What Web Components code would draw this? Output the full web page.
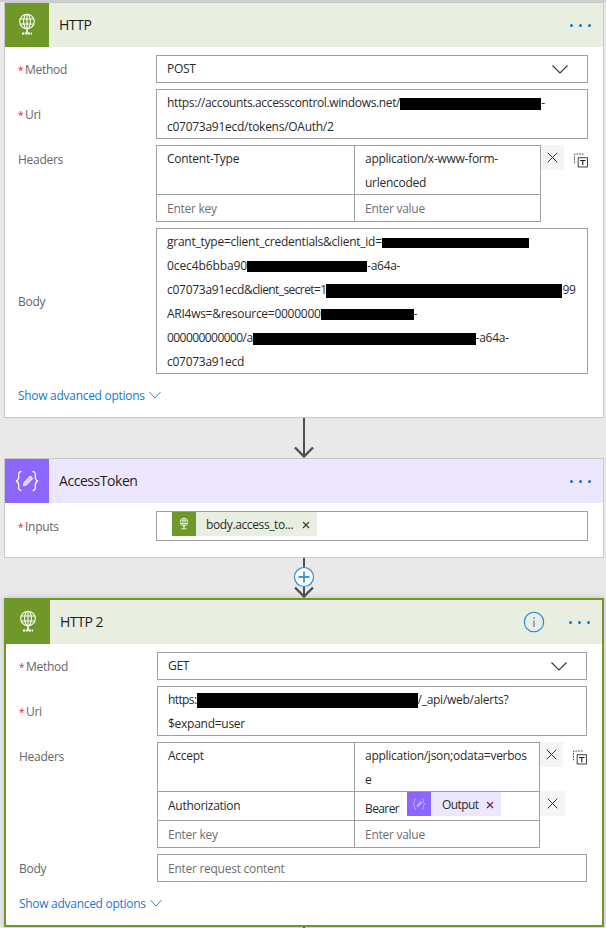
<!DOCTYPE html>
<html><head><meta charset="utf-8">
<style>
html,body{margin:0;padding:0}
body{background:#e9e9e9;width:606px;height:928px;overflow:hidden;box-sizing:border-box;padding:0 2px 0 4px;border-top:2px solid #cfcfcf;font:12px/24px "Open Sans","Noto Sans",sans-serif;letter-spacing:-.27px;color:#2b2b2b}
</style></head><body>
<flow-card kind="http" title="HTTP" first>
  <flow-row label="Method" required><flow-select>POST</flow-select></flow-row>
  <flow-row label="Uri" required><flow-field><span style="letter-spacing:-.36px">https://accounts.accesscontrol.windows.net/</span><black-out w="141" h="12"></black-out>-<br>c07073a91ecd/tokens/OAuth/2</flow-field></flow-row>
  <flow-row label="Headers" top><flow-headers key="199" val="186">
    <flow-cell kind="key" top>Content-Type</flow-cell><flow-cell kind="val" top>application/x-www-form-<br>urlencoded</flow-cell><flow-actions del trash></flow-actions>
    <flow-cell kind="key" ph>Enter key</flow-cell><flow-cell kind="val" ph>Enter value</flow-cell><flow-actions></flow-actions>
  </flow-headers></flow-row>
  <flow-row label="Body"><flow-field><span style="letter-spacing:-.245px">grant_type=client_credentials&amp;client_id=</span><black-out w="147" h="10"></black-out><br><span style="letter-spacing:-.1px">0cec4b6bba90</span><black-out w="120" h="11"></black-out>-a64a-<br>c07073a91ecd<span style="letter-spacing:-.6px">&amp;client_secret=1</span><black-out w="236" h="14"></black-out>99<br>ARI4ws=&amp;resource=0000000<black-out w="93" h="11"></black-out>-<br><span style="letter-spacing:-.56px">000000000000/a</span><black-out w="223" h="12"></black-out>-a64a-<br>c07073a91ecd</flow-field></flow-row>
  <flow-more></flow-more>
</flow-card>
<flow-link></flow-link>
<flow-card kind="var" title="AccessToken">
  <flow-row label="Inputs" required><flow-inputs><flow-chip kind="http" wide>body.access_to...</flow-chip></flow-inputs></flow-row>
</flow-card>
<flow-link plus></flow-link>
<flow-card kind="http" title="HTTP 2" selected info>
  <flow-row label="Method" required><flow-select>GET</flow-select></flow-row>
  <flow-row label="Uri" required><flow-field><span style="letter-spacing:-.6px">https:</span><black-out w="221" h="15"></black-out>/_api/web/alerts?<br>$expand=user</flow-field></flow-row>
  <flow-row label="Headers" top><flow-headers key="198" val="185">
    <flow-cell kind="key" top>Accept</flow-cell><flow-cell kind="val" top>application/json;odata=verbos<br>e</flow-cell><flow-actions del trash></flow-actions>
    <flow-cell kind="key" tall>Authorization</flow-cell><flow-cell kind="val" tall flush><flow-bearer>Bearer</flow-bearer><flow-chip kind="var">Output</flow-chip></flow-cell><flow-actions del up></flow-actions>
    <flow-cell kind="key" ph>Enter key</flow-cell><flow-cell kind="val" ph>Enter value</flow-cell><flow-actions></flow-actions>
  </flow-headers></flow-row>
  <flow-row label="Body"><flow-field single ph>Enter request content</flow-field></flow-row>
  <flow-more></flow-more>
</flow-card>
<flow-stub></flow-stub>
<script>
const globe=`<svg viewBox="0 0 44 44" width="100%" height="100%" fill="none" stroke="#fff" stroke-width="1.1"><circle cx="22" cy="18.5" r="7.3"/><ellipse cx="22" cy="18.5" rx="3.4" ry="7.3"/><path d="M22 11.2v14.6M15.2 16h13.6M15.2 21h13.6"/><path d="M22 26v5" stroke-width="1.6"/><path d="M17 30.6h10" stroke-width="2" stroke-dasharray="2.2 .7"/></svg>`;
const braces=`<svg viewBox="0 0 44 44" width="100%" height="100%" fill="none" stroke="#fff" stroke-width="1.3"><path d="M16.5 12.5c-3.4 0-2.8 2.6-2.8 5 0 2.600-.6 4-2.700 4.500 2.100.5 2.700 1.900 2.700 4.500 0 2.400-.6 5 2.800 5"/><path d="M27.500 12.500c3.400 0 2.800 2.600 2.800 5 0 2.600.6 4 2.700 4.500-2.100.5-2.700 1.900-2.700 4.500 0 2.400.6 5-2.800 5"/><path d="M18.300 26.800l1-3.500 6-6.300 2.500 2.400-6 6.300z" fill="#d9ccff" stroke-width="1"/></svg>`;
const css=(s)=>`<style>${s}</style>`;
function def(name,render){customElements.define(name,class extends HTMLElement{constructor(){super();this.attachShadow({mode:'open'})}connectedCallback(){this.shadowRoot.innerHTML=render(this)}})}
const nudge='.n{margin:1px 0 -1px}';

def('flow-card',el=>{
  const v=el.getAttribute('kind')==='var';
  const bg=v?'#8c66ff':'#6f9829', tint=v?'#ece7ff':'#e8eee0';
  const info=el.hasAttribute('info')?`<svg class="info" width="22" height="22" viewBox="0 0 22 22"><circle cx="11" cy="11" r="9.7" fill="none" stroke="#1a80d8" stroke-width="1.1"/><rect x="10.200" y="9.500" width="1.500" height="6.500" fill="#7d88cf"/><rect x="10.200" y="6.300" width="1.500" height="1.600" fill="#7d88cf"/></svg>`:'';
  return css(`:host{display:block;width:600px;box-sizing:border-box;background:#fff;border:1px solid #c8c8c8;padding-bottom:${v?'16px':'0'}}
  :host([selected]){border:2px solid #6f9829;box-shadow:0 0 6px rgba(0,0,0,.18)}
  header{display:flex;align-items:center;height:44px;background:${tint}}
  .ic{width:44px;height:44px;background:${bg};flex:none}
  h2{margin:0 0 0 10px;font:inherit;font-size:14px;line-height:44px;letter-spacing:-.45px;color:#1d1d1d;flex:1}
  .info{margin-right:24px;flex:none}
  .dots{display:flex;gap:6px;margin-right:12px}
  .dots i{width:3px;height:3px;background:#0a78d8;border-radius:50%}
  main{display:flex;flex-direction:column;gap:6px;padding:8px 15px 0 13px}`)
  +`<header><div class="ic">${v?braces:globe}</div><h2>${el.getAttribute('title')}</h2>${info}<div class="dots"><i></i><i></i><i></i></div></header><main><slot></slot></main>`;
});
def('flow-row',el=>css(`:host{display:flex;align-items:${el.hasAttribute('top')?'flex-start':'center'}}
  .l{width:138px;flex:none;color:#666;display:flex;align-items:baseline;${el.hasAttribute('top')?'padding-top:2px;':''}}
  .s{color:#e0203a;width:7px;font-size:10px;flex:none}
  .f{flex:1;min-width:0}${nudge}`)
  +`<div class="l n">${el.hasAttribute('required')?'<span class="s">*</span>':''}<span>${el.getAttribute('label')}</span></div><div class="f"><slot></slot></div>`);
def('flow-field',el=>css(`:host{display:block;border:1px solid #a0a0a0;padding:0 10px;line-height:24px;white-space:nowrap;background:#fff}
  :host([single]){line-height:26px}:host([ph]){color:#6f6f6f}${nudge}`)+`<div class="n"><slot></slot></div>`);
def('flow-select',el=>css(`:host{display:flex;align-items:center;justify-content:space-between;border:1px solid #a0a0a0;padding:0 19px 0 10px;height:28px;box-sizing:border-box;line-height:26px}
  svg{display:block}`)+`<div><slot></slot></div><svg width="16" height="9" viewBox="0 0 16 9" fill="none" stroke="#333" stroke-width="1.100"><path d="M.5.5L8 8l7.500-7.500"/></svg>`);
def('flow-inputs',el=>css(`:host{display:flex;align-items:flex-start;border:1px solid #a0a0a0;height:30px;box-sizing:border-box;padding-left:15px}`)+`<slot></slot>`);
def('black-out',el=>css(`:host{display:inline-block;vertical-align:middle;background:#000;width:${el.getAttribute('w')}px;height:${el.getAttribute('h')}px}`));
def('flow-headers',el=>css(`:host{display:grid;grid-template-columns:${el.getAttribute('key')}px ${el.getAttribute('val')}px 47px}`)+`<slot></slot>`);
def('flow-cell',el=>{
  const key=el.getAttribute('kind')==='key';
  return css(`:host{display:block;box-sizing:border-box;border-bottom:1px solid #a0a0a0;border-right:1px solid #a0a0a0;padding:0 10px;line-height:24px;white-space:nowrap;${key?'border-left:1px solid #a0a0a0;':''}}
  :host([top]){border-top:1px solid #a0a0a0;height:50px}
  :host([tall]){height:29px;line-height:26px}
  :host([ph]){height:27px;line-height:26px;color:#6f6f6f}
  .n.f{margin:0;display:flex;align-items:flex-start;gap:8px}${nudge}`)+`<div class="n ${el.hasAttribute('flush')?'f':''}"><slot></slot></div>`;
});
def('flow-bearer',el=>css(`:host{display:block;padding-top:4px;line-height:26px;letter-spacing:-.6px}`)+`<slot></slot>`);
def('flow-actions',el=>{
  const d=el.hasAttribute('del'),t=el.hasAttribute('trash');
  return css(`:host{display:flex;align-items:flex-start;min-width:0}
  .x{width:25px;height:25px;background:#f5f5f5;display:flex;align-items:center;justify-content:center;${el.hasAttribute('up')?'margin-top:-1px;':''}}
  .t{margin:8px 0 0 10px}`)
  +(d?`<div class="x"><svg width="11" height="11" viewBox="0 0 11 11" stroke="#333"><path d="M.7.7l9.600 9.600M10.300.7L.7 10.300"/></svg></div>`:'')
  +(t?`<svg class="t" width="15" height="15" viewBox="0 0 15 15" fill="none"><path d="M.5 10.500V.5h10" stroke="#444" stroke-dasharray="2 1"/><rect x="4.500" y="4.500" width="10" height="10" fill="#fff" stroke="#333"/><path d="M6.500 7.500h6M9.500 7.500v5" stroke="#222" stroke-width="1.200"/></svg>`:'');
});
def('flow-chip',el=>{
  const v=el.getAttribute('kind')==='var';
  return css(`:host{display:inline-flex;align-items:center;height:24px;background:${v?'#ece7ff':'#e8eee0'};color:#2b2b2b;line-height:24px;flex:none}
  .i{width:24px;height:24px;background:${v?'#8c66ff':'#6f9829'};flex:none}
  .i svg{opacity:${v?.65:1}}
  .t{padding-left:${v?11:10}px;letter-spacing:${v?-.6:-.38}px}
  svg.c{margin:1px 7px 0 ${v?8:9}px;flex:none}${nudge}`)
  +`<div class="i">${v?braces:globe}</div><div class="t n"><slot></slot></div><svg class="c" width="8" height="8" viewBox="0 0 8 8" stroke="${v?'#6b1f4a':'#3d3d2a'}" stroke-width="1.200"><path d="M1 1l6 6M7 1L1 7"/></svg>`;
});
def('flow-more',el=>css(`:host{display:flex;align-items:center;color:#1a78c8;height:43px;margin-top:-6px;gap:4px;letter-spacing:-.29px}
  svg{margin-top:-2px}`)+`<span>Show advanced options</span><svg width="12" height="8" viewBox="0 0 12 8" fill="none" stroke="#3a8ad0"><path d="M.5 1l5.500 6 5.500-6"/></svg>`);
def('flow-link',el=>css(`:host{display:block;height:40px;width:600px}svg{display:block;margin:0 auto}`)
  +`<svg width="40" height="40" viewBox="0 0 40 40" fill="none"><path d="M20 0V${el.hasAttribute('plus')?39:38}" stroke="#505050" stroke-width="2"/><path d="M11 29.500l9 9 9-9" stroke="#505050" stroke-width="2.400"/>${el.hasAttribute('plus')?'<circle cx="20" cy="19" r="9.500" fill="#fff" stroke="#2a8ce0" stroke-width="1.200"/><path d="M20 13.500v11M14.500 19h11" stroke="#3a96dd" stroke-width="1.800"/>':''}</svg>`);
def('flow-stub',el=>css(`:host{display:block;width:2px;height:2px;background:#505050;margin-left:299px}`));
</script>
</body></html>
